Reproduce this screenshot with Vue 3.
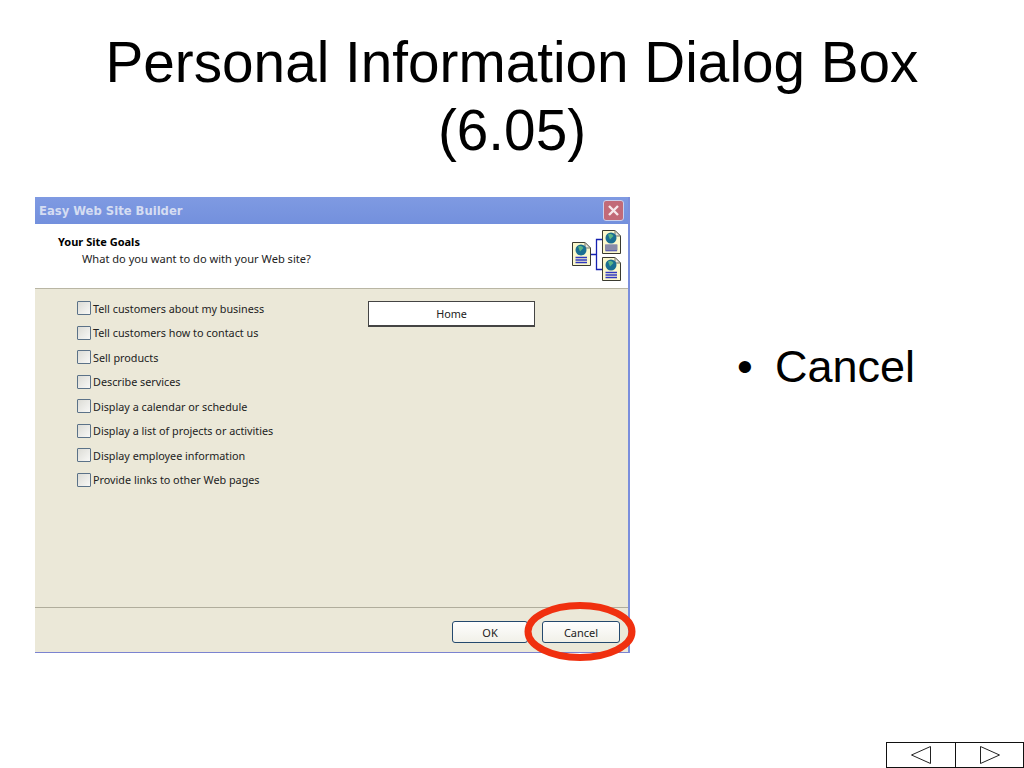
<script setup>
const goals = [
  'Tell customers about my business',
  'Tell customers how to contact us',
  'Sell products',
  'Describe services',
  'Display a calendar or schedule',
  'Display a list of projects or activities',
  'Display employee information',
  'Provide links to other Web pages',
]
</script>

<template>
  <div class="slide">
    <h1>Personal Information Dialog Box<br />(6.05)</h1>

    <div class="content">
      <section class="dialog">
        <div class="titlebar">
          <span>Easy Web Site Builder</span>
          <button class="close" aria-label="Close">
            <svg width="19" height="19" viewBox="0 0 19 19">
              <path d="M5 5L14 14M14 5L5 14" stroke="#f6e9ec" stroke-width="2.4" fill="none" />
            </svg>
          </button>
        </div>

        <div class="banner">
          <div class="banner-text">
            <h2>Your Site Goals</h2>
            <p>What do you want to do with your Web site?</p>
          </div>
          <svg class="banner-icon" width="52" height="56" viewBox="0 0 52 56">
            <defs>
              <g id="doc">
                <path d="M.5 .5H13L18.5 6V23.500H.5Z" fill="#fbf8cc" stroke="#3a3a30" />
                <path d="M13 .5V6H18.5Z" fill="#e8e8e0" stroke="#77776a" />
                <circle cx="9" cy="8" r="5.500" fill="#1b6f92" />
                <path d="M6 4.500A4 4 0 0 1 11.500 6L8 9.500Z" fill="#5db586" />
                <path d="M3.500 15.500H15M3.500 18H15M3.500 20.500H15" stroke="#3038c0" stroke-width="1.3" />
              </g>
            </defs>
            <use href="#doc" x="1" y="13" />
            <use href="#doc" x="31" y="1" />
            <use href="#doc" x="31" y="28" />
            <rect x="34" y="15.500" width="12.500" height="6" fill="#8a8ca8" />
            <path d="M20 25.500H25.500M31 10.500H25.500V40.500H31" fill="none" stroke="#1420b0" stroke-width="1.300" />
          </svg>
        </div>

        <div class="body">
          <ul class="goals">
            <li v-for="goal in goals" :key="goal">
              <span class="check"></span>
              <span>{{ goal }}</span>
            </li>
          </ul>
          <div class="page-box">Home</div>
        </div>

        <div class="footer">
          <button class="xp-btn ok">OK</button>
          <button class="xp-btn">Cancel</button>
        </div>

        <svg class="callout" width="115" height="63" viewBox="0 0 115 63">
          <ellipse cx="57" cy="31.500" rx="52" ry="26" fill="none" stroke="#f0300f" stroke-width="7" />
        </svg>
      </section>

      <ul class="bullets">
        <li>Cancel</li>
      </ul>
    </div>

    <nav class="pager">
      <button aria-label="Previous">
        <svg width="22" height="20" viewBox="0 0 22 20"><path d="M1.500 10L20.500 1.500V18.500Z" fill="none" stroke="#222" /></svg>
      </button>
      <button aria-label="Next">
        <svg width="22" height="20" viewBox="0 0 22 20"><path d="M1.500 1.500L20.500 10L1.500 18.500Z" fill="none" stroke="#222" /></svg>
      </button>
    </nav>
  </div>
</template>

<style>
html, body {
  margin: 0;
  background: #fff;
}
</style>

<style scoped>
.slide {
  width: 1024px;
  height: 768px;
  overflow: hidden;
  display: flex;
  flex-direction: column;
  font-family: "Liberation Sans", Arial, sans-serif;
  color: #000;
}

h1 {
  margin: 29px 0 0;
  font-size: 56.7px;
  font-weight: 400;
  line-height: 68px;
  text-align: center;
}

.content {
  display: flex;
  align-items: flex-start;
  margin-top: 32px;
  padding-left: 35px;
}

.dialog {
  position: relative;
  width: 595px;
  height: 456px;
  display: flex;
  flex-direction: column;
  box-sizing: border-box;
  background: #ebe8d8;
  border-right: 2px solid #7b8fdc;
  border-bottom: 1px solid #7b83d0;
  font-family: "Noto Sans", sans-serif;
  font-size: 10.8px;
  color: #222;
}

.titlebar {
  height: 27px;
  flex: none;
  display: flex;
  align-items: center;
  justify-content: space-between;
  padding: 0 4px;
  background: linear-gradient(#7f9ae2, #7390dd);
  color: #d5ddf2;
  font-family: "DejaVu Sans", sans-serif;
  font-size: 11.6px;
  font-weight: 700;
}

.close {
  width: 21px;
  height: 21px;
  padding: 0;
  display: flex;
  align-items: center;
  justify-content: center;
  border: 1px solid #c9cfec;
  border-radius: 3px;
  background: #c26a78;
}

.banner {
  height: 65px;
  flex: none;
  display: flex;
  justify-content: space-between;
  background: #fff;
  border-bottom: 1px solid #b9b6a4;
  box-sizing: border-box;
}

.banner-text {
  padding: 10px 0 0 23px;
}

h2 {
  margin: 0;
  font-size: 11px;
  line-height: 15px;
  font-weight: 700;
  color: #000;
}

.banner-text p {
  margin: 2px 0 0 24px;
  font-size: 11.1px;
  line-height: 15px;
}

.banner-icon {
  margin: 5px 5px 0 0;
}

.body {
  flex: 1;
  display: flex;
  padding-top: 7px;
}

.goals {
  list-style: none;
  margin: 0;
  padding: 0 0 0 42px;
  width: 333px;
  box-sizing: border-box;
}

.goals li {
  height: 24.500px;
  display: flex;
  align-items: center;
  gap: 2px;
}

.check {
  width: 14px;
  height: 14px;
  box-sizing: border-box;
  border: 1px solid #5b7288;
  border-radius: 1px;
  background: linear-gradient(135deg, #dcdcd6, #f8f8f6);
}

.page-box {
  width: 167px;
  height: 26px;
  margin-top: 5px;
  box-sizing: border-box;
  display: flex;
  align-items: center;
  justify-content: center;
  background: #fff;
  border: 1px solid #444;
  border-bottom-width: 2px;
}

.footer {
  height: 45px;
  flex: none;
  display: flex;
  justify-content: flex-end;
  gap: 14px;
  padding: 13px 8px 0 0;
  box-sizing: border-box;
  border-top: 1px solid #b0ad9c;
}

.xp-btn {
  width: 78px;
  height: 22px;
  padding: 0;
  border: 1px solid #24496e;
  border-radius: 3px;
  background: linear-gradient(#fefefe, #f1f0e8);
  font-family: inherit;
  font-size: 11px;
  color: #222;
}

.xp-btn.ok {
  width: 76px;
}

.callout {
  position: absolute;
  left: 488px;
  top: 403px;
}

.bullets {
  list-style: none;
  margin: 140px 0 0 107px;
  padding: 0;
  font-size: 45px;
  line-height: 60px;
}

.bullets li {
  position: relative;
  padding-left: 38px;
}

.bullets li::before {
  content: "•";
  position: absolute;
  left: 0;
}

.pager {
  margin: auto 0 0 auto;
  display: flex;
  height: 26px;
  border: 1px solid #111;
  box-sizing: border-box;
}

.pager button {
  width: 68px;
  padding: 0;
  display: flex;
  align-items: center;
  justify-content: center;
  background: #fff;
  border: none;
}

.pager button + button {
  border-left: 1px solid #111;
}
</style>
